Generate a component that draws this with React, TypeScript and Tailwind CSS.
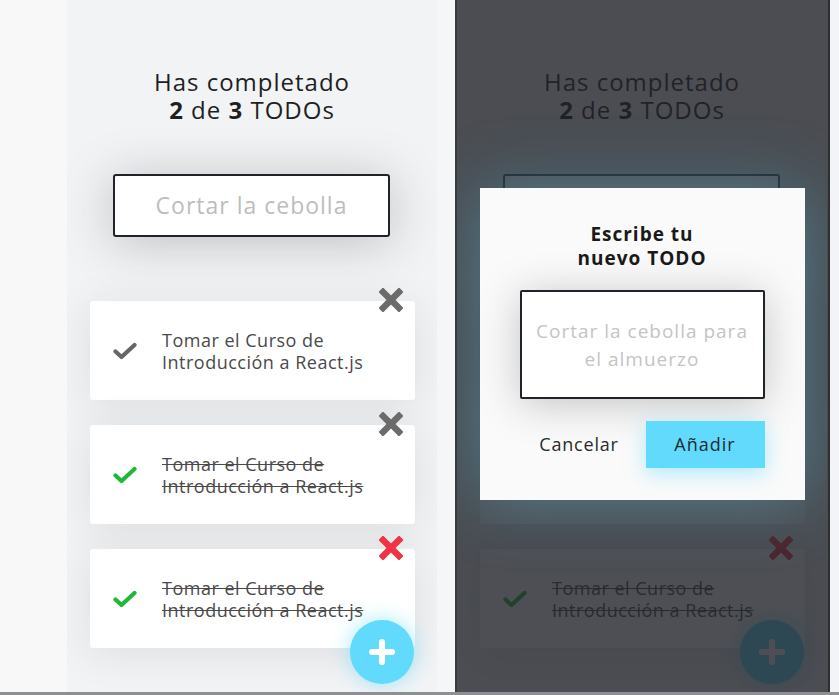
import React from 'react';

const font = { fontFamily: '"Open Sans", "Liberation Sans", sans-serif' };

function CheckIcon({ color }: { color: string }) {
  return (
    <svg viewBox="0 0 24 18" className="w-6 h-[18px] shrink-0" fill="none">
      <path d="M2.5 9.5 L8.5 15 L21.5 3" stroke={color} strokeWidth="4.2" strokeLinecap="round" strokeLinejoin="round" />
    </svg>
  );
}

function DeleteIcon({ color }: { color: string }) {
  return (
    <svg viewBox="0 0 24 24" className="w-6 h-6" fill="none">
      <path d="M4 4 L20 20 M20 4 L4 20" stroke={color} strokeWidth="6.5" strokeLinecap="square" />
    </svg>
  );
}

function TodoItem({ completed, danger, covered }: { completed: boolean; danger?: boolean; covered?: boolean }) {
  const lineClass = `block ${completed ? 'line-through' : ''}`;
  return (
    <li className="relative flex items-center h-[99px] bg-white rounded-[3px] shadow-[0_5px_40px_rgba(32,35,41,0.10)]">
      {/* items hidden under the modal keep their box but not their content */}
      <div className={`flex items-center ${covered ? 'invisible' : ''}`}>
        <span className="ml-[23px]">
          <CheckIcon color={completed ? '#1fb83a' : '#666666'} />
        </span>
        <p className="ml-[25px] text-[18px] leading-[22px] tracking-[0.5px] text-[#4a4a4a]">
          <span className={lineClass}>Tomar el Curso de</span>
          <span className={lineClass}>Introducción a React.js</span>
        </p>
      </div>
      <span className={`absolute right-[12px] top-[-13px] ${covered ? 'invisible' : ''}`}>
        <DeleteIcon color={danger ? '#ef3444' : '#6b6b6b'} />
      </span>
    </li>
  );
}

function TodoScreen({ withModal }: { withModal?: boolean }) {
  return (
    <div className="relative w-[370px] h-[692px] shrink-0 bg-[#f2f3f5] overflow-hidden" style={font}>
      <h1 className="pt-[68px] text-center text-[24px] leading-[28px] tracking-[1px] text-[#1f1f1f]">
        <span className="block">Has completado</span>
        <span className="block">
          <b>2</b> de <b>3</b> TODOs
        </span>
      </h1>

      <div className="mt-[50px] ml-[46px] w-[277px] h-[63px] flex items-center justify-center bg-white border-2 border-[#202329] rounded-[3px] shadow-[0_5px_50px_rgba(32,35,41,0.25)]">
        <span className={`text-[23px] tracking-[1px] text-[#bdbdbd] ${withModal ? 'invisible' : ''}`}>Cortar la cebolla</span>
      </div>

      <ul className="mt-[64px] ml-[23px] w-[325px] flex flex-col gap-[25px]">
        <TodoItem completed={false} covered={withModal} />
        <TodoItem completed covered={withModal} />
        <TodoItem completed danger />
      </ul>

      <button className="absolute right-[23px] bottom-[8px] w-16 h-16 rounded-full bg-[#61dafb] flex items-center justify-center shadow-[0_0_20px_rgba(97,218,251,0.6)]">
        <svg viewBox="0 0 28 28" className="w-7 h-7" fill="none">
          <path d="M14 4 V24 M4 14 H24" stroke="white" strokeWidth="6" strokeLinecap="round" />
        </svg>
      </button>

      {withModal && (
        <div className="absolute inset-0 bg-[rgba(32,35,41,0.8)] flex justify-center items-start">
          <form className="mt-[188px] w-[325px] h-[312px] bg-[#fafafa] flex flex-col items-center pt-[34px] shadow-[0_0_60px_rgba(97,218,251,0.35)]">
            <h2 className="text-[19px] leading-[24px] tracking-[1px] font-bold text-[#1a1a1a] text-center">
              <span className="block">Escribe tu</span>
              <span className="block">nuevo TODO</span>
            </h2>
            <div className="mt-[20px] w-[245px] h-[109px] flex flex-col items-center justify-center bg-white border-2 border-[#202329] rounded-[2px] shadow-[0_5px_40px_rgba(32,35,41,0.25)]">
              <span className="block text-[19px] leading-[28px] tracking-[1px] text-[#c4c4c4]">Cortar la cebolla para</span>
              <span className="block text-[19px] leading-[28px] tracking-[1px] text-[#c4c4c4]">el almuerzo</span>
            </div>
            <div className="mt-[22px] w-[245px] flex justify-between">
              <button type="button" className="w-[119px] h-[47px] text-[18px] tracking-[0.8px] text-[#2a2a2a]">
                Cancelar
              </button>
              <button type="button" className="w-[119px] h-[47px] bg-[#61dafb] text-[18px] tracking-[1px] text-[#1f2a33] shadow-[0_5px_20px_rgba(97,218,251,0.5)]">
                Añadir
              </button>
            </div>
          </form>
        </div>
      )}
    </div>
  );
}

export default function App() {
  return (
    <div className="flex flex-col w-[839px] h-[695px] overflow-hidden">
      <div className="flex h-[692px] bg-[#f7f7f8]">
        <div className="w-[67px] shrink-0 bg-[#f8f8f8]" />
        <TodoScreen />
        <div className="w-[18px] shrink-0 bg-[#f5f6f7]" />
        <div className="w-[2px] shrink-0 bg-[#3a3b3d]" />
        <TodoScreen withModal />
        <div className="w-[1px] shrink-0 bg-[#4b4d51]" />
        <div className="w-[2px] shrink-0 bg-[#2e2f31]" />
        <div className="flex-1 bg-[#f3f4f7]" />
      </div>
      <div className="h-[3px] bg-[#8e8f91]" />
    </div>
  );
}
